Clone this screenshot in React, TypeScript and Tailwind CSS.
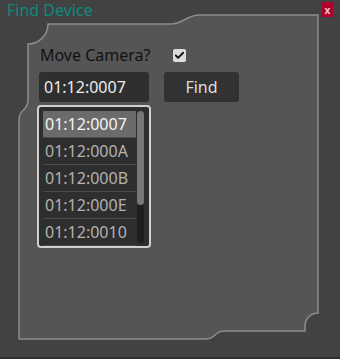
import { Check } from 'lucide-react'

const devices = ['01:12:0007', '01:12:000A', '01:12:000B', '01:12:000E', '01:12:0010']

// decorative panel frame behind the form
function PanelFrame() {
  return (
    <svg className="absolute inset-0 pointer-events-none" width="340" height="359" viewBox="0 0 340 359">
      <path
        d="M48,24 H170 C184,24 186,15 200,15 H318 V313 A13,13 0 0 0 305,326 V331 H225 C212,331 218,339 205,339 H19 V120 C19,108 28,112 28,100 V44 A20,20 0 0 0 48,24 Z"
        fill="#555555"
        stroke="#8c8c8c"
        strokeWidth="1.5"
      />
    </svg>
  )
}

export default function App() {
  return (
    <div
      className="relative w-[340px] h-[359px] bg-[#424242] border-b-2 border-[#303030] overflow-hidden"
      style={{ fontFamily: '"Noto Sans", "Open Sans", sans-serif' }}
    >
      <PanelFrame />
      <div className="relative">
        {/* 标题栏 */}
        <div className="flex items-start justify-between h-[20px] pl-[7px] pr-[7px] pt-[1px]">
          <span className="text-[16px] leading-[19px] text-[#0b8a80]">Find Device</span>
          <button className="mt-[1px] w-[11px] h-[15px] bg-[#b0002c] text-[#f4c0cc] text-[10px] leading-[14px] font-bold flex items-center justify-center">
            x
          </button>
        </div>

        <div className="pl-[39px] pt-[25px]">
          <div className="flex items-center h-[20px]">
            <span className="text-[16px] leading-[20px] text-[#111111] w-[134px] pl-[1px]">Move Camera?</span>
            <span className="w-[13px] h-[13px] rounded-[2px] bg-[#dcdcdc] flex items-center justify-center">
              <Check className="w-[11px] h-[11px] text-[#111111]" strokeWidth={4} />
            </span>
          </div>

          <div className="flex mt-[7px] gap-[15px]">
            <div className="w-[110px] h-[30px] rounded-[3px] bg-[#2f2f2f] text-[#ececec] text-[16px] leading-[30px] pl-[5px]">
              01:12:0007
            </div>
            <button className="w-[75px] h-[30px] rounded-[3px] bg-[#323232] text-[#dddddd] text-[16px] leading-[30px]">
              Find
            </button>
          </div>

          <div className="mt-[3px] -ml-[2px] w-[114px] h-[143px] border-2 border-[#d0d0d0] rounded-[4px] bg-[#2e2e2e] flex pl-[4px] pt-[4px]">
            <div className="w-[93px] flex flex-col">
              {devices.map((d, i) => (
                <div
                  key={d}
                  className={`h-[27px] text-[16px] leading-[26px] pl-[2px] border-b border-[#4a4a4a] ${
                    i === 0 ? 'bg-[#6b6b6b] text-[#f4f4f4]' : 'text-[#b2b2b2]'
                  }`}
                >
                  {d}
                </div>
              ))}
            </div>
            <div className="ml-[1px] w-[7px] h-[132px] rounded-full bg-[#1f1f1f]">
              <div className="w-[7px] h-[94px] rounded-full bg-[#787878]" />
            </div>
          </div>
        </div>
      </div>
    </div>
  )
}
